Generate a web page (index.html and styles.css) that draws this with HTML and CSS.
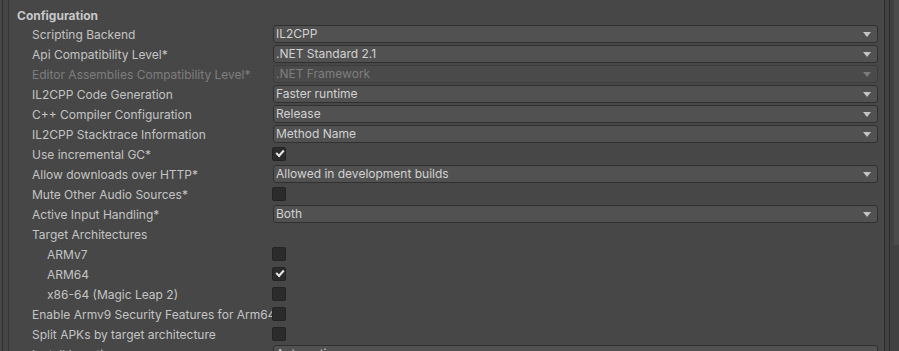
FILE: index.html
```html
<!DOCTYPE html>
<html>
<head>
	<meta charset="UTF-8">
	<title>Player Settings - Configuration</title>
	<link rel="stylesheet" href="styles.css">
</head>
<body>
	<div class="window">
		<div class="gutter"></div>
		<div class="inspector">
			<div class="heading">Configuration</div>

			<div class="row">
				<div class="label">Scripting Backend</div>
				<div class="field"><div class="popup"><span>IL2CPP</span><i class="arrow"></i></div></div>
			</div>
			<div class="row">
				<div class="label">Api Compatibility Level*</div>
				<div class="field"><div class="popup"><span>.NET Standard 2.1</span><i class="arrow"></i></div></div>
			</div>
			<div class="row disabled">
				<div class="label">Editor Assemblies Compatibility Level*</div>
				<div class="field"><div class="popup"><span>.NET Framework</span><i class="arrow"></i></div></div>
			</div>
			<div class="row">
				<div class="label">IL2CPP Code Generation</div>
				<div class="field"><div class="popup"><span>Faster runtime</span><i class="arrow"></i></div></div>
			</div>
			<div class="row">
				<div class="label">C++ Compiler Configuration</div>
				<div class="field"><div class="popup"><span>Release</span><i class="arrow"></i></div></div>
			</div>
			<div class="row">
				<div class="label">IL2CPP Stacktrace Information</div>
				<div class="field"><div class="popup"><span>Method Name</span><i class="arrow"></i></div></div>
			</div>
			<div class="row">
				<div class="label">Use incremental GC*</div>
				<div class="field"><div class="toggle checked"></div></div>
			</div>
			<div class="row">
				<div class="label">Allow downloads over HTTP*</div>
				<div class="field"><div class="popup"><span>Allowed in development builds</span><i class="arrow"></i></div></div>
			</div>
			<div class="row">
				<div class="label">Mute Other Audio Sources*</div>
				<div class="field"><div class="toggle"></div></div>
			</div>
			<div class="row">
				<div class="label">Active Input Handling*</div>
				<div class="field"><div class="popup"><span>Both</span><i class="arrow"></i></div></div>
			</div>
			<div class="row">
				<div class="label">Target Architectures</div>
			</div>
			<div class="row sub">
				<div class="label">ARMv7</div>
				<div class="field"><div class="toggle"></div></div>
			</div>
			<div class="row sub">
				<div class="label">ARM64</div>
				<div class="field"><div class="toggle checked"></div></div>
			</div>
			<div class="row sub">
				<div class="label">x86-64 (Magic Leap 2)</div>
				<div class="field"><div class="toggle"></div></div>
			</div>
			<div class="row">
				<div class="label">Enable Armv9 Security Features for Arm64</div>
				<div class="field"><div class="toggle"></div></div>
			</div>
			<div class="row">
				<div class="label">Split APKs by target architecture</div>
				<div class="field"><div class="toggle"></div></div>
			</div>
			<div class="row">
				<div class="label">Install Location</div>
				<div class="field"><div class="popup"><span>Automatic</span><i class="arrow"></i></div></div>
			</div>
		</div>
		<div class="edge"></div>
		<div class="scrollbar"><div class="thumb"></div></div>
	</div>
</body>
</html>
```

FILE: styles.css
```css
html, body {
	margin: 0;
	height: 100%;
	overflow: hidden;
}
body {
	background-color: #474747;
	font-family: Inter, "Noto Sans", sans-serif;
	font-size: 12px;
	color: #c4c4c4;
}
.window {
	display: flex;
	height: 100%;
}
.gutter {
	margin-left: 2px;
	width: 5px;
	border-left: 1px solid #2c2c2c;
	border-right: 1px solid #363636;
	background-color: #454545;
}
.inspector {
	flex: 1;
	padding: 6px 6px 0 8px;
	min-width: 0;
}
.heading {
	font-weight: bold;
	height: 18px;
	line-height: 19px;
	color: #c8c8c8;
}
.row {
	display: flex;
	align-items: center;
	height: 20px;
}
.label {
	width: 255px;
	padding-left: 15px;
	box-sizing: border-box;
	margin-right: 1px;
	white-space: nowrap;
	overflow: hidden;
	flex-shrink: 0;
}
.sub .label {
	padding-left: 30px;
}
.field {
	flex: 1;
	display: flex;
	align-items: center;
}
.popup {
	flex: 1;
	height: 18px;
	box-sizing: border-box;
	border: 1px solid #303030;
	border-radius: 3px;
	background-color: #515151;
	color: #d2d2d2;
	display: flex;
	align-items: center;
	padding: 0 6px 0 2px;
	line-height: 16px;
}
.popup span {
	flex: 1;
}
.arrow {
	width: 0;
	height: 0;
	border-left: 4px solid transparent;
	border-right: 4px solid transparent;
	border-top: 5px solid #c4c4c4;
	margin-top: 1px;
}
.disabled .label,
.disabled .popup {
	color: #7e7e7e;
}
.disabled .popup {
	background-color: #4a4a4a;
	border-color: #3c3c3c;
}
.disabled .arrow {
	border-top-color: #7a7a7a;
}
.toggle {
	width: 14px;
	height: 14px;
	box-sizing: border-box;
	border: 1px solid #232323;
	border-radius: 2px;
	background-color: #2b2b2b;
	position: relative;
	margin-left: -1px;
}
.toggle.checked::after {
	content: "";
	position: absolute;
	left: 3px;
	top: 2px;
	width: 6px;
	height: 3px;
	border-left: 2px solid #e6e6e6;
	border-bottom: 2px solid #e6e6e6;
	transform: rotate(-48deg);
}
.edge {
	width: 4px;
	border-left: 1px solid #2b2b2b;
	border-right: 1px solid #2b2b2b;
	background-color: #424242;
}
.scrollbar {
	width: 9px;
	background-color: #414141;
	position: relative;
}
.thumb {
	margin-left: 4px;
	height: 245px;
	background-color: #4c4c4c;
}
```
